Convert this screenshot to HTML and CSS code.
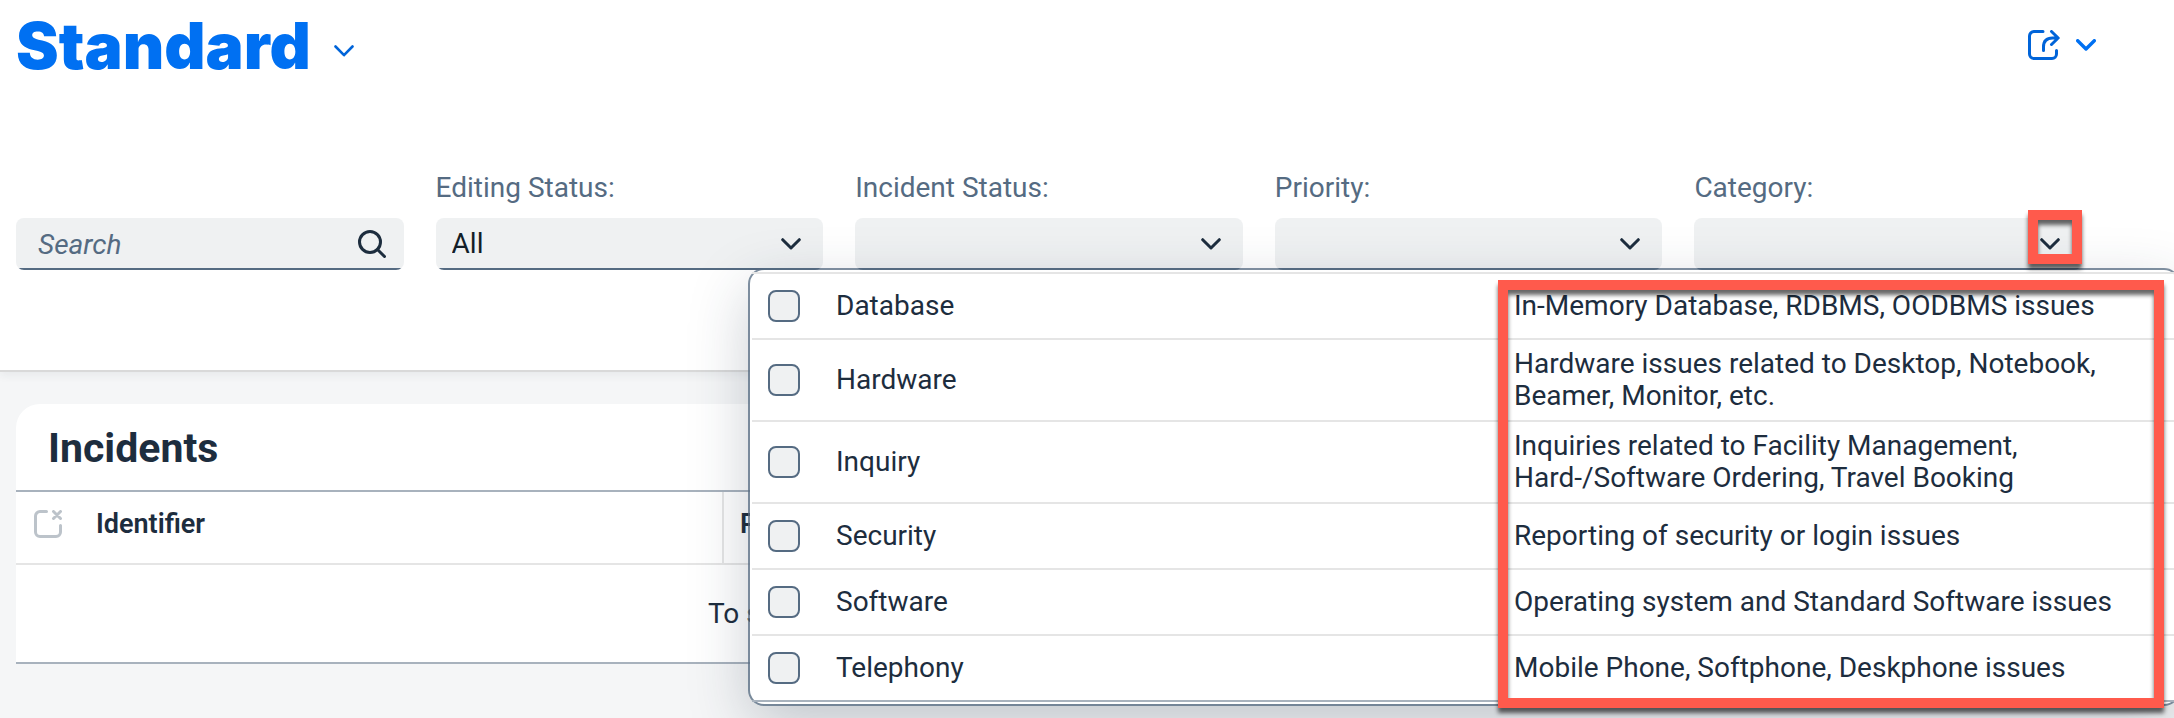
FILE: index.html
```html
<!DOCTYPE html>
<html lang="en">
<head>
<meta charset="utf-8">
<title>Incidents</title>
<link rel="stylesheet" href="styles.css">
</head>
<body>
<header class="page-header">
  <div class="title-bar">
    <h1 class="variant-title">Standard</h1>
    <button class="icon-button variant-toggle" type="button" aria-label="Select view">
      <svg width="20" height="12" viewBox="0 0 20 12"><path d="M1.500 1.500 10 10.200 18.500 1.500"/></svg>
    </button>
    <div class="title-actions">
      <button class="icon-button share" type="button" aria-label="Share">
        <svg width="32" height="30" viewBox="0 0 32 30"><path d="M15 1.500H6A4.500 4.500 0 0 0 1.500 6V24A4.500 4.500 0 0 0 6 28.500H24A4.500 4.500 0 0 0 28.500 24V20.500M15.500 20.500V17Q15.500 8 24.500 8H30M23.500 1.500 30.200 8 23.500 14.500"/></svg>
      </button>
      <button class="icon-button share-menu" type="button" aria-label="Share options">
        <svg width="20" height="12" viewBox="0 0 20 12"><path d="M1.700 1.700 10 10 18.300 1.700"/></svg>
      </button>
    </div>
  </div>

  <form class="filters">
    <div class="filter">
      <div class="control">
        <input class="search-input" type="search" placeholder="Search" aria-label="Search">
        <svg class="search-icon" width="28" height="28" viewBox="0 0 28 28"><circle cx="12" cy="12" r="10.500"/><path d="M19.500 19.500 26.500 26.500"/></svg>
      </div>
    </div>
    <div class="filter">
      <label for="editing">Editing Status:</label>
      <div class="control">
        <select id="editing"><option>All</option></select>
        <svg class="arrow" width="20" height="12" viewBox="0 0 20 12"><path d="M1.700 1.700 10 10 18.300 1.700"/></svg>
      </div>
    </div>
    <div class="filter">
      <label for="status">Incident Status:</label>
      <div class="control">
        <select id="status"><option></option></select>
        <svg class="arrow" width="20" height="12" viewBox="0 0 20 12"><path d="M1.700 1.700 10 10 18.300 1.700"/></svg>
      </div>
    </div>
    <div class="filter">
      <label for="priority">Priority:</label>
      <div class="control">
        <select id="priority"><option></option></select>
        <svg class="arrow" width="20" height="12" viewBox="0 0 20 12"><path d="M1.700 1.700 10 10 18.300 1.700"/></svg>
      </div>
    </div>
    <div class="filter">
      <label for="category">Category:</label>
      <div class="control">
        <select id="category"><option></option></select>
        <svg class="arrow" width="20" height="12" viewBox="0 0 20 12"><path d="M1.700 1.700 10 10 18.300 1.700"/></svg>
        <div class="popup">
          <table class="options">
            <tbody>
              <tr><td class="pick"><input type="checkbox" id="c1"></td><td><label for="c1">Database</label></td><td>In-Memory Database, RDBMS, OODBMS issues</td></tr>
              <tr><td class="pick"><input type="checkbox" id="c2"></td><td><label for="c2">Hardware</label></td><td>Hardware issues related to Desktop, Notebook, Beamer, Monitor, etc.</td></tr>
              <tr><td class="pick"><input type="checkbox" id="c3"></td><td><label for="c3">Inquiry</label></td><td>Inquiries related to Facility Management, Hard-/Software Ordering, Travel Booking</td></tr>
              <tr><td class="pick"><input type="checkbox" id="c4"></td><td><label for="c4">Security</label></td><td>Reporting of security or login issues</td></tr>
              <tr><td class="pick"><input type="checkbox" id="c5"></td><td><label for="c5">Software</label></td><td>Operating system and Standard Software issues</td></tr>
              <tr><td class="pick"><input type="checkbox" id="c6"></td><td><label for="c6">Telephony</label></td><td>Mobile Phone, Softphone, Deskphone issues</td></tr>
            </tbody>
          </table>
          <div class="highlight highlight-descriptions"></div>
        </div>
        <div class="highlight highlight-arrow"></div>
      </div>
    </div>
  </form>
</header>

<main class="content">
  <section class="card">
    <h2 class="card-title">Incidents</h2>
    <table class="incidents">
      <thead>
        <tr>
          <th class="clear-col"><button class="icon-button clear" type="button" aria-label="Deselect all"><svg width="28" height="28" viewBox="0 0 28 28"><path d="M12.500 1.500H6A4.500 4.500 0 0 0 1.500 6V22A4.500 4.500 0 0 0 6 26.500H22A4.500 4.500 0 0 0 26.500 22V15.500M19.500 1.500 26.500 8.500M26.500 1.500 19.500 8.500"/></svg></button></th>
          <th class="id-col">Identifier</th>
          <th>Priority</th>
        </tr>
      </thead>
      <tbody>
        <tr><td class="empty" colspan="3">To start, set the relevant filters.</td></tr>
      </tbody>
    </table>
  </section>
</main>
</body>
</html>
```

FILE: styles.css
```css
* { box-sizing: border-box; }

html { overflow: hidden; }

body {
  margin: 0;
  min-height: 100vh;
  background: #f5f6f7;
  color: #1d2d3e;
  font: 28px/32px Roboto, "Liberation Sans", sans-serif;
}

svg {
  display: block;
  fill: none;
  stroke: currentColor;
  stroke-width: 3;
  stroke-linecap: round;
  stroke-linejoin: round;
}

.icon-button {
  display: block;
  padding: 0;
  border: 0;
  background: none;
  color: #0064d9;
}

.page-header {
  position: relative;
  z-index: 1;
  padding: 8px 92px 100px 16px;
  background: #fff;
  border-bottom: 2px solid #d9d9d9;
  box-shadow: 0 4px 8px rgba(34, 53, 72, 0.06);
}

.title-bar {
  display: flex;
  align-items: center;
  gap: 23px;
  height: 76px;
}

.variant-title {
  margin: 0;
  color: #0070f2;
  font-family: Inter, Roboto, sans-serif;
  font-size: 64px;
  font-weight: 900;
  line-height: 76px;
}

.variant-toggle { padding-top: 10px; }

.variant-toggle svg { stroke-width: 2.600; }

.title-actions {
  display: flex;
  align-items: center;
  gap: 16px;
  height: 74px;
  margin: 0 -14px 2px auto;
}

.share-menu { color: #0070f2; }

.share-menu svg { stroke-width: 3.400; }

.filters {
  display: grid;
  grid-template-columns: repeat(5, 1fr);
  gap: 32px;
  align-items: end;
  padding-top: 88px;
}

.filter > label {
  display: block;
  margin-bottom: 14px;
  color: #556b82;
}

.control {
  position: relative;
  display: grid;
  align-items: center;
}

.control > select,
.control > input,
.control > svg { grid-area: 1 / 1; }

.control > select,
.control > input {
  width: 100%;
  height: 52px;
  padding: 0 16px;
  border: 0;
  border-radius: 8px;
  background: #eff1f2 linear-gradient(#556b82, #556b82) bottom / 100% 2px no-repeat;
  color: #131e29;
  font: inherit;
  appearance: none;
}

.control > .search-input { padding: 0 22px; }

.search-input::placeholder {
  color: #556b82;
  font-style: italic;
  opacity: 1;
}

.control > svg {
  justify-self: end;
  margin-right: 22px;
  pointer-events: none;
}

.control > .search-icon { margin-right: 18px; }

.popup {
  position: absolute;
  top: 100%;
  right: -96px;
  width: 1428px;
  padding: 2px;
  border-radius: 14px;
  background: #fff;
  box-shadow: 0 0 0 2px rgba(85, 107, 130, 0.75), 0 20px 60px rgba(34, 53, 72, 0.25);
}

.options {
  width: 100%;
  table-layout: fixed;
  border-spacing: 0;
  border-top: 2px solid #e5e5e5;
  border-bottom: 2px solid #a8b2bd;
}

.options td {
  height: 66px;
  padding: 8px 16px;
  border-bottom: 2px solid #e5e5e5;
  vertical-align: middle;
}

.options tr:last-child td {
  height: 64px;
  border-bottom: 0;
}

.options .pick {
  width: 68px;
  padding: 0 0 0 16px;
}

.pick input {
  display: block;
  width: 32px;
  height: 32px;
  margin: 0;
  border: 2px solid #556b82;
  border-radius: 8px;
  background: #eff1f2;
  appearance: none;
}

.highlight {
  position: absolute;
  border: 10px solid #ff5a4c;
  filter: drop-shadow(0 5px 2px rgba(0, 0, 0, 0.6));
  pointer-events: none;
}

.highlight-arrow {
  top: -8px;
  right: 0;
  width: 54px;
  height: 54px;
}

.highlight-descriptions {
  top: 10px;
  right: 14px;
  bottom: -4px;
  width: 666px;
}

.content { padding: 32px 92px 56px 16px; }

.card {
  overflow: hidden;
  border-radius: 24px 24px 0 0;
  background: #fff;
}

.card-title {
  margin: 0;
  padding: 20px 32px 18px;
  font-size: 41px;
  font-weight: 700;
  line-height: 48px;
}

.incidents {
  width: 100%;
  table-layout: fixed;
  border-spacing: 0;
  border-top: 2px solid #a8b2bd;
  border-bottom: 2px solid #a8b2bd;
}

.incidents th {
  height: 73px;
  padding: 0 16px 8px;
  border-bottom: 2px solid #e5e5e5;
  font-size: 27px;
  font-weight: 600;
  text-align: left;
}

.incidents .clear-col {
  width: 64px;
  padding: 0 0 8px 18px;
}

.clear { color: #bcc3ca; }

.incidents .id-col {
  width: 644px;
  border-right: 2px solid #e5e5e5;
}

.empty {
  height: 97px;
  padding: 0 0 0 692px;
}
```
